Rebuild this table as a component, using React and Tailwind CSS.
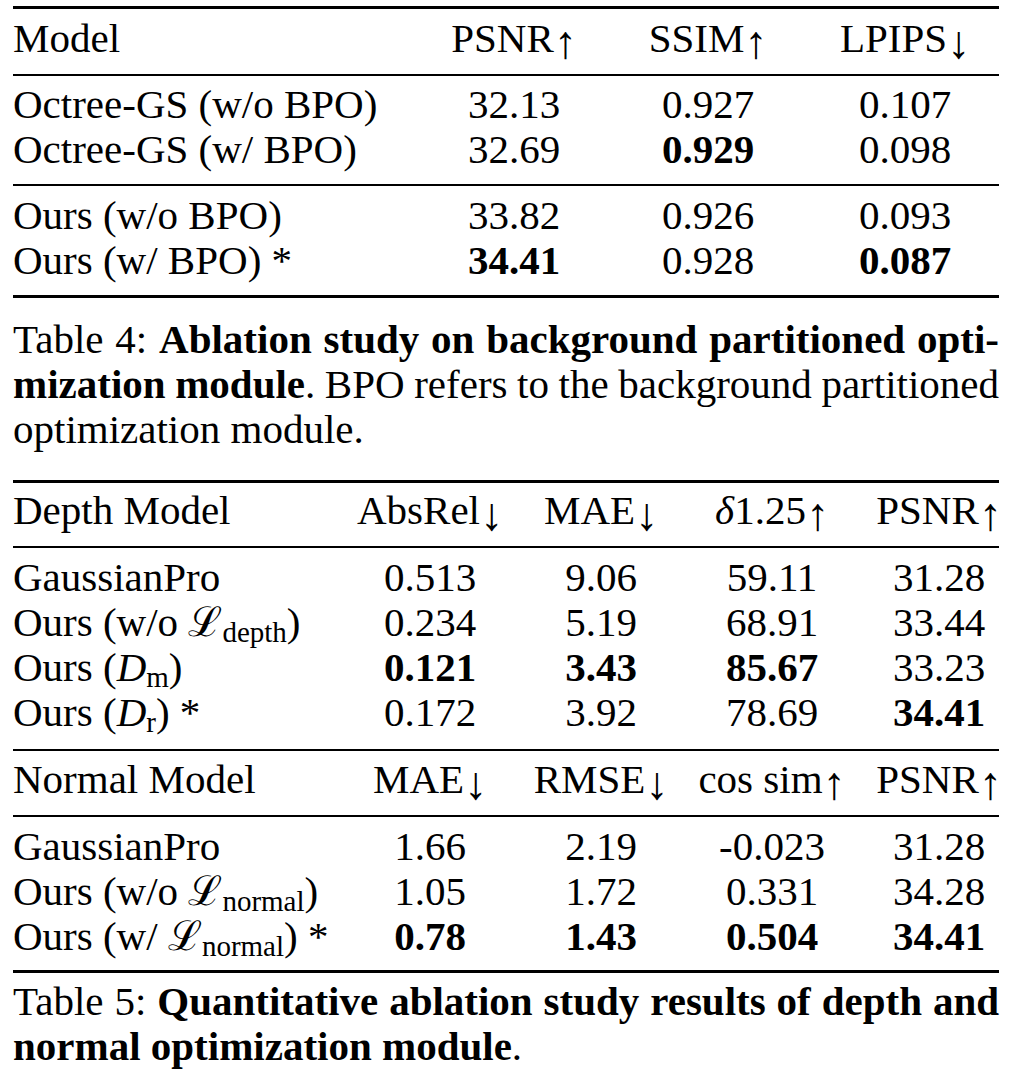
import React from "react";

function Sub({ children }) {
  return (
    <span className="text-[29px] leading-[0] [vertical-align:-6px]">{children}</span>
  );
}

function L() {
  return <span className="font-['DejaVu_Serif',serif]">ℒ</span>;
}

function Up() {
  return <span className="inline-block leading-[0] text-[46px] [vertical-align:-6px]">↑</span>;
}

function Down() {
  return <span className="inline-block leading-[0] text-[46px] [vertical-align:-6px]">↓</span>;
}

function Cell({ children, bold }) {
  return (
    <div className={"flex justify-center whitespace-nowrap" + (bold ? " font-bold" : "")}>
      <span>{children}</span>
    </div>
  );
}

function Row4({ label, cells }) {
  return (
    <div className="grid h-[45px] grid-cols-[410px_182px_206px_188px]">
      <div className="whitespace-nowrap">{label}</div>
      {cells.map((c, i) => (
        <Cell key={i} bold={c.b}>
          {c.v}
        </Cell>
      ))}
    </div>
  );
}

function Row5({ label, cells }) {
  return (
    <div className="grid h-[45px] grid-cols-[310px_214px_128px_214px_120px]">
      <div className="whitespace-nowrap">{label}</div>
      {cells.map((c, i) => (
        <Cell key={i} bold={c.b}>
          {c.v}
        </Cell>
      ))}
    </div>
  );
}

const n = (v) => ({ v });
const b = (v) => ({ v, b: true });

export default function App() {
  return (
    <div className="min-h-[1076px] bg-white pl-[13px] pt-[6px] font-['Liberation_Serif',serif] text-[41px] leading-[45px] text-black">
      <div className="w-[986px]">
        {/* Table 4 */}
        <div className="border-t-[3px] border-b-[3px] border-black">
          <div className="border-b-2 border-black pt-[7px] pb-[13px]">
            <Row4
              label="Model"
              cells={[
                n(<>PSNR<Up /></>),
                n(<>SSIM<Up /></>),
                n(<>LPIPS<Down /></>),
              ]}
            />
          </div>
          <div className="border-b-2 border-black pt-[6px] pb-[12px]">
            <Row4 label="Octree-GS (w/o BPO)" cells={[n("32.13"), n("0.927"), n("0.107")]} />
            <Row4 label="Octree-GS (w/ BPO)" cells={[n("32.69"), b("0.929"), n("0.098")]} />
          </div>
          <div className="pt-[7px] pb-[12px]">
            <Row4 label="Ours (w/o BPO)" cells={[n("33.82"), n("0.926"), n("0.093")]} />
            <Row4 label="Ours (w/ BPO) *" cells={[b("34.41"), n("0.928"), b("0.087")]} />
          </div>
        </div>

        {/* Caption 4 */}
        <div className="mt-[19px]">
          <div className="text-justify [text-align-last:justify] [word-spacing:-3px]">
            Table 4: <span className="font-bold">Ablation study on background partitioned opti-</span>
          </div>
          <div className="text-justify [text-align-last:justify] [word-spacing:-5px]">
            <span className="font-bold">mization module</span>. BPO refers to the background partitioned
          </div>
          <div>optimization module.</div>
        </div>

        {/* Table 5 */}
        <div className="mt-[28px] border-t-[3px] border-b-[3px] border-black">
          <div className="border-b-2 border-black pt-[5px] pb-[13px]">
            <Row5
              label="Depth Model"
              cells={[
                n(<>AbsRel<Down /></>),
                n(<>MAE<Down /></>),
                n(
                  <>
                    <span className="italic">δ</span>1.25<Up />
                  </>
                ),
                n(<>PSNR<Up /></>),
              ]}
            />
          </div>
          <div className="border-b-2 border-black pt-[7px] pb-[14px]">
            <Row5 label="GaussianPro" cells={[n("0.513"), n("9.06"), n("59.11"), n("31.28")]} />
            <Row5
              label={
                <>
                  Ours (w/o <L />
                  <Sub>depth</Sub>)
                </>
              }
              cells={[n("0.234"), n("5.19"), n("68.91"), n("33.44")]}
            />
            <Row5
              label={
                <>
                  Ours (<span className="italic">D</span>
                  <Sub>m</Sub>)
                </>
              }
              cells={[b("0.121"), b("3.43"), b("85.67"), n("33.23")]}
            />
            <Row5
              label={
                <>
                  Ours (<span className="italic">D</span>
                  <Sub>r</Sub>) *
                </>
              }
              cells={[n("0.172"), n("3.92"), n("78.69"), b("34.41")]}
            />
          </div>
          <div className="border-b-2 border-black pt-[6px] pb-[13px]">
            <Row5
              label="Normal Model"
              cells={[
                n(<>MAE<Down /></>),
                n(<>RMSE<Down /></>),
                n(<>cos sim<Up /></>),
                n(<>PSNR<Up /></>),
              ]}
            />
          </div>
          <div className="pt-[7px] pb-[11px]">
            <Row5 label="GaussianPro" cells={[n("1.66"), n("2.19"), n("-0.023"), n("31.28")]} />
            <Row5
              label={
                <>
                  Ours (w/o <L />
                  <Sub>normal</Sub>)
                </>
              }
              cells={[n("1.05"), n("1.72"), n("0.331"), n("34.28")]}
            />
            <Row5
              label={
                <>
                  Ours (w/ <L />
                  <Sub>normal</Sub>) *
                </>
              }
              cells={[b("0.78"), b("1.43"), b("0.504"), b("34.41")]}
            />
          </div>
        </div>

        {/* Caption 5 */}
        <div className="mt-[6px]">
          <div className="text-justify [text-align-last:justify] [word-spacing:-3px]">
            Table 5: <span className="font-bold">Quantitative ablation study results of depth and</span>
          </div>
          <div>
            <span className="font-bold">normal optimization module</span>.
          </div>
        </div>
      </div>
    </div>
  );
}
